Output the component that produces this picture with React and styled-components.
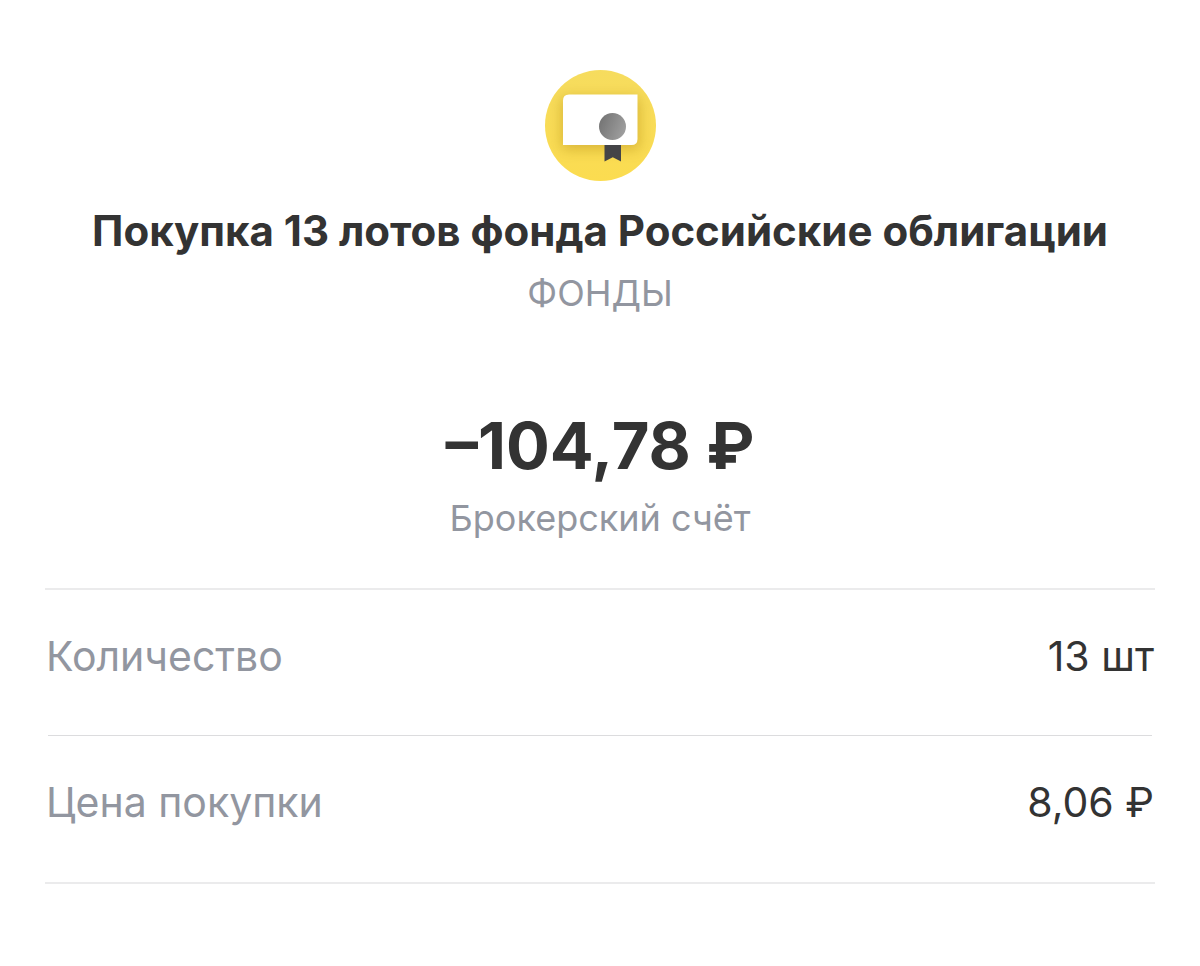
import styled, { createGlobalStyle } from 'styled-components';

const muted = '#9296a0';

const GlobalStyle = createGlobalStyle`
    body {
        margin: 0;
        background: #fff;
        color: #333;
        font-family: Inter, 'Liberation Sans', sans-serif;
    }
`;

const Page = styled.main`
    padding: 70px 45px 48px;
`;

const Header = styled.header`
    display: flex;
    flex-direction: column;
    align-items: center;
    text-align: center;
`;

const Logo = styled.svg`
    width: 111px;
    height: 111px;
`;

const Title = styled.h1`
    margin: 24px 0 0;
    font-size: 42px;
    line-height: 52px;
    font-weight: 700;
`;

const Caption = styled.p`
    margin: ${(props) => props.$gap}px 0 0;
    color: ${muted};
    font-size: 36px;
    line-height: 48px;
`;

const Category = styled(Caption)`
    text-transform: uppercase;
`;

const Amount = styled.p`
    margin: 89px 0 0;
    font-size: 65px;
    line-height: 80px;
    font-weight: 700;
`;

const Details = styled.dl`
    margin: 46px 0 0;
    border: 2px solid #ebebec;
    border-width: 2px 0;
`;

const Row = styled.div`
    display: flex;
    justify-content: space-between;
    padding: 40px 1px 54px;
    font-size: 41px;
    line-height: 52px;

    /* inner divider is a bit shorter than the outer ones */
    &:not(:last-child) {
        background: linear-gradient(#dcdcde, #dcdcde) no-repeat bottom / calc(100% - 6px) 1px;
    }
`;

const Label = styled.dt`
    color: ${muted};
`;

const Value = styled.dd`
    margin: 0;
`;

const details = [
    { label: 'Количество', value: '13 шт' },
    { label: 'Цена покупки', value: '8,06 ₽' },
];

const FundLogo = () => (
    <Logo viewBox="0 0 111 111" aria-hidden="true">
        <defs>
            <clipPath id="disc">
                <circle cx="55.5" cy="55.5" r="55.5" />
            </clipPath>
            <linearGradient id="disc-fill" x1="0" y1="0" x2="0" y2="1">
                <stop offset="0" stopColor="#f6dc5e" />
                <stop offset="1" stopColor="#fbdc50" />
            </linearGradient>
            <linearGradient id="seal" x1="0" y1="0.3" x2="1" y2="0.7">
                <stop offset="0" stopColor="#747474" />
                <stop offset="1" stopColor="#a0a0a0" />
            </linearGradient>
            <filter id="shadow" x="-30%" y="-40%" width="160%" height="180%">
                <feGaussianBlur stdDeviation="7" />
            </filter>
        </defs>
        <circle cx="55.5" cy="55.5" r="55.5" fill="url(#disc-fill)" />
        <g clipPath="url(#disc)">
            <rect x="17" y="28" width="77" height="51" fill="#a87c10" opacity="0.42" filter="url(#shadow)" />
        </g>
        <path d="M59.5 74H76v17.5l-8.2-4.2-8.3 4.2z" fill="#444447" />
        <path d="M24 24.5h68.5V69q0 6-6 6H18V30.5q0-6 6-6z" fill="#fff" />
        <circle cx="67.5" cy="56.5" r="13.5" fill="url(#seal)" />
    </Logo>
);

const App = () => (
    <>
        <GlobalStyle />
        <Page>
            <Header>
                <FundLogo />
                <Title>Покупка 13 лотов фонда Российские облигации</Title>
                <Category $gap={12}>Фонды</Category>
                <Amount>–104,78 ₽</Amount>
                <Caption $gap={8}>Брокерский счёт</Caption>
            </Header>
            <Details>
                {details.map(({ label, value }) => (
                    <Row key={label}>
                        <Label>{label}</Label>
                        <Value>{value}</Value>
                    </Row>
                ))}
            </Details>
        </Page>
    </>
);

export default App;
